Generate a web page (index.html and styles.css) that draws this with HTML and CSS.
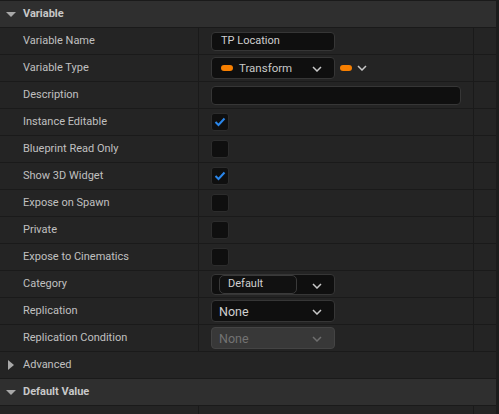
FILE: index.html
```html
<!DOCTYPE html>
<html>
<head>
<meta charset="utf-8">
<link rel="stylesheet" href="styles.css">
</head>
<body>
<div class="page">
  <div class="panel">
    <div class="header first">
      <span class="tri-down"></span><span class="htitle">Variable</span>
    </div>

    <div class="row">
      <div class="label">Variable Name</div>
      <div class="value"><div class="textbox name">TP Location</div></div>
      <div class="extra"></div>
    </div>

    <div class="row">
      <div class="label">Variable Type</div>
      <div class="value">
        <div class="combo">
          <span class="pill"></span><span class="ctext">Transform</span>
          <svg class="chev" width="10" height="6" viewBox="0 0 10 6"><polyline points="1,1 5,5 9,1" fill="none" stroke="#c8c8c8" stroke-width="1.5"/></svg>
        </div>
        <span class="pill small"></span>
        <svg class="chev2" width="10" height="6" viewBox="0 0 10 6"><polyline points="1,1 5,5 9,1" fill="none" stroke="#c8c8c8" stroke-width="1.5"/></svg>
      </div>
      <div class="extra"></div>
    </div>

    <div class="row">
      <div class="label">Description</div>
      <div class="value"><div class="textbox desc"></div></div>
      <div class="extra"></div>
    </div>

    <div class="row">
      <div class="label">Instance Editable</div>
      <div class="value"><div class="check"><svg width="16" height="16" viewBox="0 0 16 16"><polyline points="3.5,8 6.5,11 12.5,4.5" fill="none" stroke="#2a86ea" stroke-width="2"/></svg></div></div>
      <div class="extra"></div>
    </div>

    <div class="row">
      <div class="label">Blueprint Read Only</div>
      <div class="value"><div class="check"></div></div>
      <div class="extra"></div>
    </div>

    <div class="row">
      <div class="label">Show 3D Widget</div>
      <div class="value"><div class="check"><svg width="16" height="16" viewBox="0 0 16 16"><polyline points="3.5,8 6.5,11 12.5,4.5" fill="none" stroke="#2a86ea" stroke-width="2"/></svg></div></div>
      <div class="extra"></div>
    </div>

    <div class="row">
      <div class="label">Expose on Spawn</div>
      <div class="value"><div class="check"></div></div>
      <div class="extra"></div>
    </div>

    <div class="row">
      <div class="label">Private</div>
      <div class="value"><div class="check"></div></div>
      <div class="extra"></div>
    </div>

    <div class="row">
      <div class="label">Expose to Cinematics</div>
      <div class="value"><div class="check"></div></div>
      <div class="extra"></div>
    </div>

    <div class="row">
      <div class="label">Category</div>
      <div class="value">
        <div class="combo cat">
          <div class="catbox">Default</div>
          <svg class="chev" width="10" height="6" viewBox="0 0 10 6"><polyline points="1,1 5,5 9,1" fill="none" stroke="#c8c8c8" stroke-width="1.5"/></svg>
        </div>
      </div>
      <div class="extra"></div>
    </div>

    <div class="row">
      <div class="label">Replication</div>
      <div class="value">
        <div class="combo big">
          <span class="ntext">None</span>
          <svg class="chev" width="10" height="6" viewBox="0 0 10 6"><polyline points="1,1 5,5 9,1" fill="none" stroke="#c8c8c8" stroke-width="1.5"/></svg>
        </div>
      </div>
      <div class="extra"></div>
    </div>

    <div class="row">
      <div class="label">Replication Condition</div>
      <div class="value">
        <div class="combo big disabled">
          <span class="ntext">None</span>
          <svg class="chev" width="10" height="6" viewBox="0 0 10 6"><polyline points="1,1 5,5 9,1" fill="none" stroke="#6e6e6e" stroke-width="1.5"/></svg>
        </div>
      </div>
      <div class="extra"></div>
    </div>

    <div class="advanced">
      <span class="tri-right"></span><span class="atext">Advanced</span>
    </div>

    <div class="header">
      <span class="tri-down"></span><span class="htitle">Default Value</span>
    </div>

    <div class="row">
      <div class="label"></div>
      <div class="value"></div>
      <div class="extra"></div>
    </div>
  </div>
  <div class="scroll"></div>
</div>
</body>
</html>
```

FILE: styles.css
```css
html, body {
  margin: 0;
  padding: 0;
  background: #1c1c1c;
}
body {
  font-family: Roboto, "Liberation Sans", sans-serif;
  font-size: 11px;
  color: #c0c0c0;
  width: 499px;
  height: 414px;
  overflow: hidden;
}
.page {
  display: flex;
  height: 414px;
}
.panel {
  width: 496px;
  background: #242424;
  overflow: hidden;
}
.scroll {
  width: 3px;
  background: #1c1c1c;
}
.header {
  box-sizing: border-box;
  height: 28px;
  background: #2f2f2f;
  border-top: 1px solid #1a1a1a;
  border-bottom: 1px solid #1a1a1a;
  display: flex;
  align-items: center;
  padding-left: 6px;
}
.tri-down {
  width: 0;
  height: 0;
  border-left: 5px solid transparent;
  border-right: 5px solid transparent;
  border-top: 5px solid #a8a8a8;
  margin-right: 7px;
}
.htitle {
  font-weight: bold;
  color: #c8c8c8;
  padding-bottom: 2px;
}
.row {
  box-sizing: border-box;
  height: 27px;
  border-bottom: 1px solid #1a1a1a;
  display: grid;
  grid-template-columns: 199px 275px 22px;
}
.label {
  border-right: 1px solid #1a1a1a;
  display: flex;
  align-items: center;
  padding-left: 23px;
  padding-bottom: 2px;
}
.value {
  border-right: 1px solid #1a1a1a;
  display: flex;
  align-items: center;
  padding-left: 12px;
}
.textbox {
  box-sizing: border-box;
  height: 19px;
  background: #0f0f0f;
  border: 1px solid #363636;
  border-radius: 4px;
  display: flex;
  align-items: center;
  padding-left: 9px;
  padding-bottom: 1px;
  color: #d0d0d0;
}
.textbox.name { width: 124px; }
.textbox.desc { width: 250px; }
.combo {
  box-sizing: border-box;
  width: 124px;
  height: 22px;
  background: #0f0f0f;
  border: 1px solid #363636;
  border-radius: 4px;
  display: flex;
  align-items: center;
  padding-left: 9px;
  position: relative;
  color: #c8c8c8;
}
.combo .chev {
  position: absolute;
  right: 12px;
  top: 8px;
}
.pill {
  width: 12px;
  height: 6px;
  border-radius: 3px;
  background: #f77f00;
  margin-right: 6px;
}
.pill.small {
  margin-left: 5px;
  margin-right: 5px;
}
.chev2 { display: block; }
.ctext { font-size: 11.5px; padding-bottom: 1px; }
.check {
  box-sizing: border-box;
  width: 18px;
  height: 18px;
  background: #0f0f0f;
  border: 1px solid #2c2c2c;
  border-radius: 3px;
  display: flex;
  align-items: center;
  justify-content: center;
}
.check svg { display: block; }
.combo.cat {
  height: 21px;
  padding-left: 7px;
  align-items: flex-start;
}
.catbox {
  box-sizing: border-box;
  width: 78px;
  height: 19px;
  border: 1px solid #3a3a3a;
  border-radius: 5px;
  background: #111111;
  padding-left: 8px;
  padding-bottom: 2px;
  display: flex;
  align-items: center;
  color: #d0d0d0;
}
.combo.big {
  padding-left: 7px;
}
.ntext {
  font-size: 12.5px;
  color: #d0d0d0;
}
.combo.disabled {
  background: #383838;
  border-color: #444444;
}
.combo.disabled .ntext { color: #737373; }
.advanced {
  box-sizing: border-box;
  height: 26px;
  display: flex;
  align-items: center;
  padding-left: 8px;
}
.atext { padding-bottom: 2px; }
.tri-right {
  width: 0;
  height: 0;
  border-top: 5px solid transparent;
  border-bottom: 5px solid transparent;
  border-left: 6px solid #a8a8a8;
  margin-right: 9px;
}
```
